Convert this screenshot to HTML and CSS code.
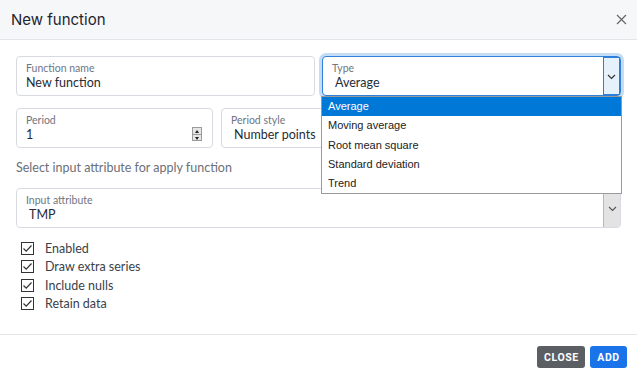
FILE: index.html
```html
<!DOCTYPE html>
<html>
<head>
<meta charset="utf-8">
<link rel="stylesheet" href="styles.css">
</head>
<body>
<div class="dialog">
  <div class="header">
    <div class="title">New function</div>
    <svg class="close-x" width="11" height="11" viewBox="0 0 11 11"><path d="M1 1L10 10M10 1L1 10" stroke="#666" stroke-width="1.2" fill="none"/></svg>
  </div>
  <div class="body">
    <div class="row two">
      <div class="field">
        <div class="label">Function name</div>
        <div class="value">New function</div>
      </div>
      <div class="field select focused">
        <div class="sel-text">
          <div class="label">Type</div>
          <div class="value sv">Average</div>
        </div>
        <div class="arrow blue">
          <svg width="9" height="6" viewBox="0 0 9 6"><path d="M1 1L4.5 4.5L8 1" stroke="#333" stroke-width="1.2" fill="none"/></svg>
        </div>
        <ul class="dropdown">
          <li class="active">Average</li>
          <li>Moving average</li>
          <li>Root mean square</li>
          <li>Standard deviation</li>
          <li>Trend</li>
        </ul>
      </div>
    </div>
    <div class="row second">
      <div class="field period">
        <div class="sel-text">
          <div class="label">Period</div>
          <div class="value">1</div>
        </div>
        <div class="spinner">
          <span class="up"></span>
          <span class="down"></span>
        </div>
      </div>
      <div class="field">
        <div class="label">Period style</div>
        <div class="value sv">Number points</div>
      </div>
    </div>
    <div class="hint">Select input attribute for apply function</div>
    <div class="field select">
      <div class="sel-text">
        <div class="label">Input attribute</div>
        <div class="value sv">TMP</div>
      </div>
      <div class="arrow gray">
        <svg width="9" height="6" viewBox="0 0 9 6"><path d="M1 1L4.5 4.5L8 1" stroke="#555" stroke-width="1.1" fill="none"/></svg>
      </div>
    </div>
    <div class="checks">
      <label class="check"><svg width="13" height="13" viewBox="0 0 13 13"><rect x="0.5" y="0.5" width="12" height="12" fill="#fff" stroke="#333"/><path d="M2.5 6.5L5.2 9.2L10.5 3.5" stroke="#333" stroke-width="1.2" fill="none"/></svg>Enabled</label>
      <label class="check"><svg width="13" height="13" viewBox="0 0 13 13"><rect x="0.5" y="0.5" width="12" height="12" fill="#fff" stroke="#333"/><path d="M2.5 6.5L5.2 9.2L10.5 3.5" stroke="#333" stroke-width="1.2" fill="none"/></svg>Draw extra series</label>
      <label class="check"><svg width="13" height="13" viewBox="0 0 13 13"><rect x="0.5" y="0.5" width="12" height="12" fill="#fff" stroke="#333"/><path d="M2.5 6.5L5.2 9.2L10.5 3.5" stroke="#333" stroke-width="1.2" fill="none"/></svg>Include nulls</label>
      <label class="check"><svg width="13" height="13" viewBox="0 0 13 13"><rect x="0.5" y="0.5" width="12" height="12" fill="#fff" stroke="#333"/><path d="M2.5 6.5L5.2 9.2L10.5 3.5" stroke="#333" stroke-width="1.2" fill="none"/></svg>Retain data</label>
    </div>
  </div>
  <div class="footer">
    <button class="btn close">CLOSE</button>
    <button class="btn add">ADD</button>
  </div>
</div>
</body>
</html>
```
FILE: styles.css
```css
* { box-sizing: border-box; }
html, body { margin: 0; padding: 0; background: #fff; }
body { width: 637px; height: 380px; overflow: hidden; font-family: "Lato", "Open Sans", sans-serif; color: #222; }
.dialog { width: 637px; height: 380px; display: flex; flex-direction: column; }
.header {
  height: 40px; background: #f6f7f9; border-bottom: 1px solid #e3e5e9;
  display: flex; align-items: center; justify-content: space-between;
  padding: 0 10px 0 11px;
}
.title { font-family: "Inter", sans-serif; font-size: 15px; color: #1d2330; padding-bottom: 1px; }
.body { padding: 16px 16px 0 16px; flex: 1; }
.row { display: grid; gap: 7px; }
.row.two { grid-template-columns: 299px 299px; }
.row.second { grid-template-columns: 197px 1fr; gap: 8px; margin-top: 12px; }
.field {
  position: relative; height: 40px; border: 1px solid #d7dbe1; border-radius: 4px;
  padding: 5px 9px 0 9px; background: #fff;
}
.label { font-size: 10.5px; color: #70757f; line-height: 13px; }
.value { font-size: 12.5px; color: #262b36; line-height: 16px; }
.value.sv { padding-left: 3px; }
.select { display: flex; padding-right: 0; }
.sel-text { flex: 1; }
.arrow { display: flex; align-items: center; justify-content: center; }
.arrow.blue { background: #e5f1fb; border: 1px solid #2f7fd6; margin: -5px 0 0 0; height: 38px; width: 17px; }
.arrow.gray { background: #e3e3e3; border-left: 1px solid #b8b8b8; height: 38px; margin: -5px 0 0 0; width: 17px; }
.arrow svg { margin-top: 1px; }
.focused { border-color: #2f7fd6; box-shadow: 0 0 0 3px #c5dcf7; }
.dropdown {
  position: absolute; left: -2px; top: 39px; width: 301px; margin: 0; padding: 0; list-style: none;
  background: #fff; border: 1px solid #9a9a9a; z-index: 10;
  font-family: "Liberation Sans", Arial, sans-serif; font-size: 11px; color: #222;
}
.dropdown li { height: 19.3px; line-height: 19px; padding-left: 6px; }
.dropdown li.active { background: #0078d7; color: #fff; }
.period { display: flex; }
.spinner {
  width: 10px; height: 14px; margin-top: 13px; margin-right: 1px; display: flex; flex-direction: column;
  border: 1px solid #9a9a9a; background: #e6e6e6;
}
.spinner span { flex: 1; position: relative; }
.spinner .up { border-bottom: 1px solid #9a9a9a; }
.spinner .up::after, .spinner .down::after {
  content: ""; position: absolute; left: 2px; border-left: 2.5px solid transparent; border-right: 2.5px solid transparent;
}
.spinner .up::after { top: 2px; border-bottom: 3px solid #222; }
.spinner .down::after { top: 2px; border-top: 3px solid #222; }
.hint { font-size: 12.5px; color: #6b6f78; margin-top: 12px; height: 16px; line-height: 16px; }
.hint + .field { margin-top: 12px; }
.checks { margin-top: 11px; display: flex; flex-direction: column; }
.check { display: flex; align-items: center; height: 18.5px; font-size: 12.5px; color: #3a3f4a; padding-left: 5px; }
.check svg { margin-right: 11px; }
.footer {
  height: 46px; border-top: 1px solid #e3e5e9; display: flex; justify-content: flex-end;
  align-items: flex-start; padding: 11px 10px 0 0; gap: 5px;
}
.btn {
  height: 22px; border: none; border-radius: 3px; color: #fff; font-family: "Roboto", sans-serif;
  font-weight: 700; font-size: 10.5px; letter-spacing: 0.6px; padding: 0 7px;
}
.btn.close { background: #5b5f64; width: 48px; }
.btn.add { background: #1a73e8; width: 37px; }
```
